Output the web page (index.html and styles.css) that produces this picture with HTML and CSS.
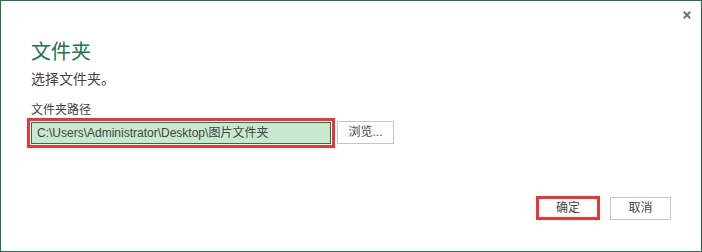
FILE: index.html
```html
<!DOCTYPE html>
<html lang="zh-CN">
<head>
<meta charset="utf-8">
<link rel="stylesheet" href="styles.css">
</head>
<body>
<div class="dialog">
  <button class="close" aria-label="关闭">
    <svg width="8" height="8" viewBox="0 0 8 8"><path d="M0.8 0.8 L7.2 7.2 M7.2 0.8 L0.8 7.2" stroke="#707070" stroke-width="2" fill="none"/></svg>
  </button>
  <div class="title">文件夹</div>
  <div class="subtitle">选择文件夹。</div>
  <div class="label">文件夹路径</div>
  <div class="path-row">
    <div class="path-input">C:\Users\Administrator\Desktop\图片文件夹</div>
    <button class="btn browse">浏览...</button>
  </div>
  <div class="footer">
    <button class="btn ok">确定</button>
    <button class="btn cancel">取消</button>
  </div>
</div>
</body>
</html>
```

FILE: styles.css
```css
* { box-sizing: border-box; }
html, body { margin: 0; padding: 0; background: #fff; }
body {
  font-family: "Liberation Sans", "Noto Sans CJK SC", sans-serif;
  color: #444;
}
.dialog {
  position: relative;
  width: 702px;
  height: 252px;
  border: 1px solid #217346;
  padding: 41px 30px 31px 30px;
  display: flex;
  flex-direction: column;
}
.close {
  position: absolute;
  top: 10px;
  right: 10px;
  width: 8px;
  height: 8px;
  padding: 0;
  border: 0;
  background: none;
  display: block;
}
.close svg { display: block; }
.title {
  font-size: 20px;
  line-height: 20px;
  color: #217346;
  margin-bottom: 10px;
}
.subtitle {
  font-size: 14px;
  line-height: 14px;
  color: #444;
  margin-bottom: 18px;
}
.label {
  font-size: 12px;
  line-height: 12px;
  color: #444;
  margin-bottom: 6px;
}
.path-row {
  display: flex;
  align-items: center;
}
.path-input {
  width: 300px;
  height: 22px;
  border: 1px solid #217346;
  background: #cae7cf;
  outline: 3px solid #ee3535;
  outline-offset: 1px;
  font-size: 12px;
  line-height: 20px;
  padding-left: 5px;
  color: #444;
  white-space: nowrap;
}
.btn {
  font-family: "Liberation Sans", "Noto Sans CJK SC", sans-serif;
  font-size: 12px;
  color: #444;
  background: #fff;
  border: 1px solid #c6c6c6;
  height: 23px;
  padding: 0;
  line-height: 21px;
  text-align: center;
}
.browse {
  width: 57px;
  margin-left: 6px;
  margin-top: -1px;
}
.footer {
  margin-top: auto;
  display: flex;
  justify-content: flex-end;
  gap: 10px;
}
.ok {
  width: 64px;
  height: 24px;
  border: 3px solid #ee3535;
  line-height: 18px;
}
.cancel {
  width: 61px;
  margin-top: 1px;
}
```
